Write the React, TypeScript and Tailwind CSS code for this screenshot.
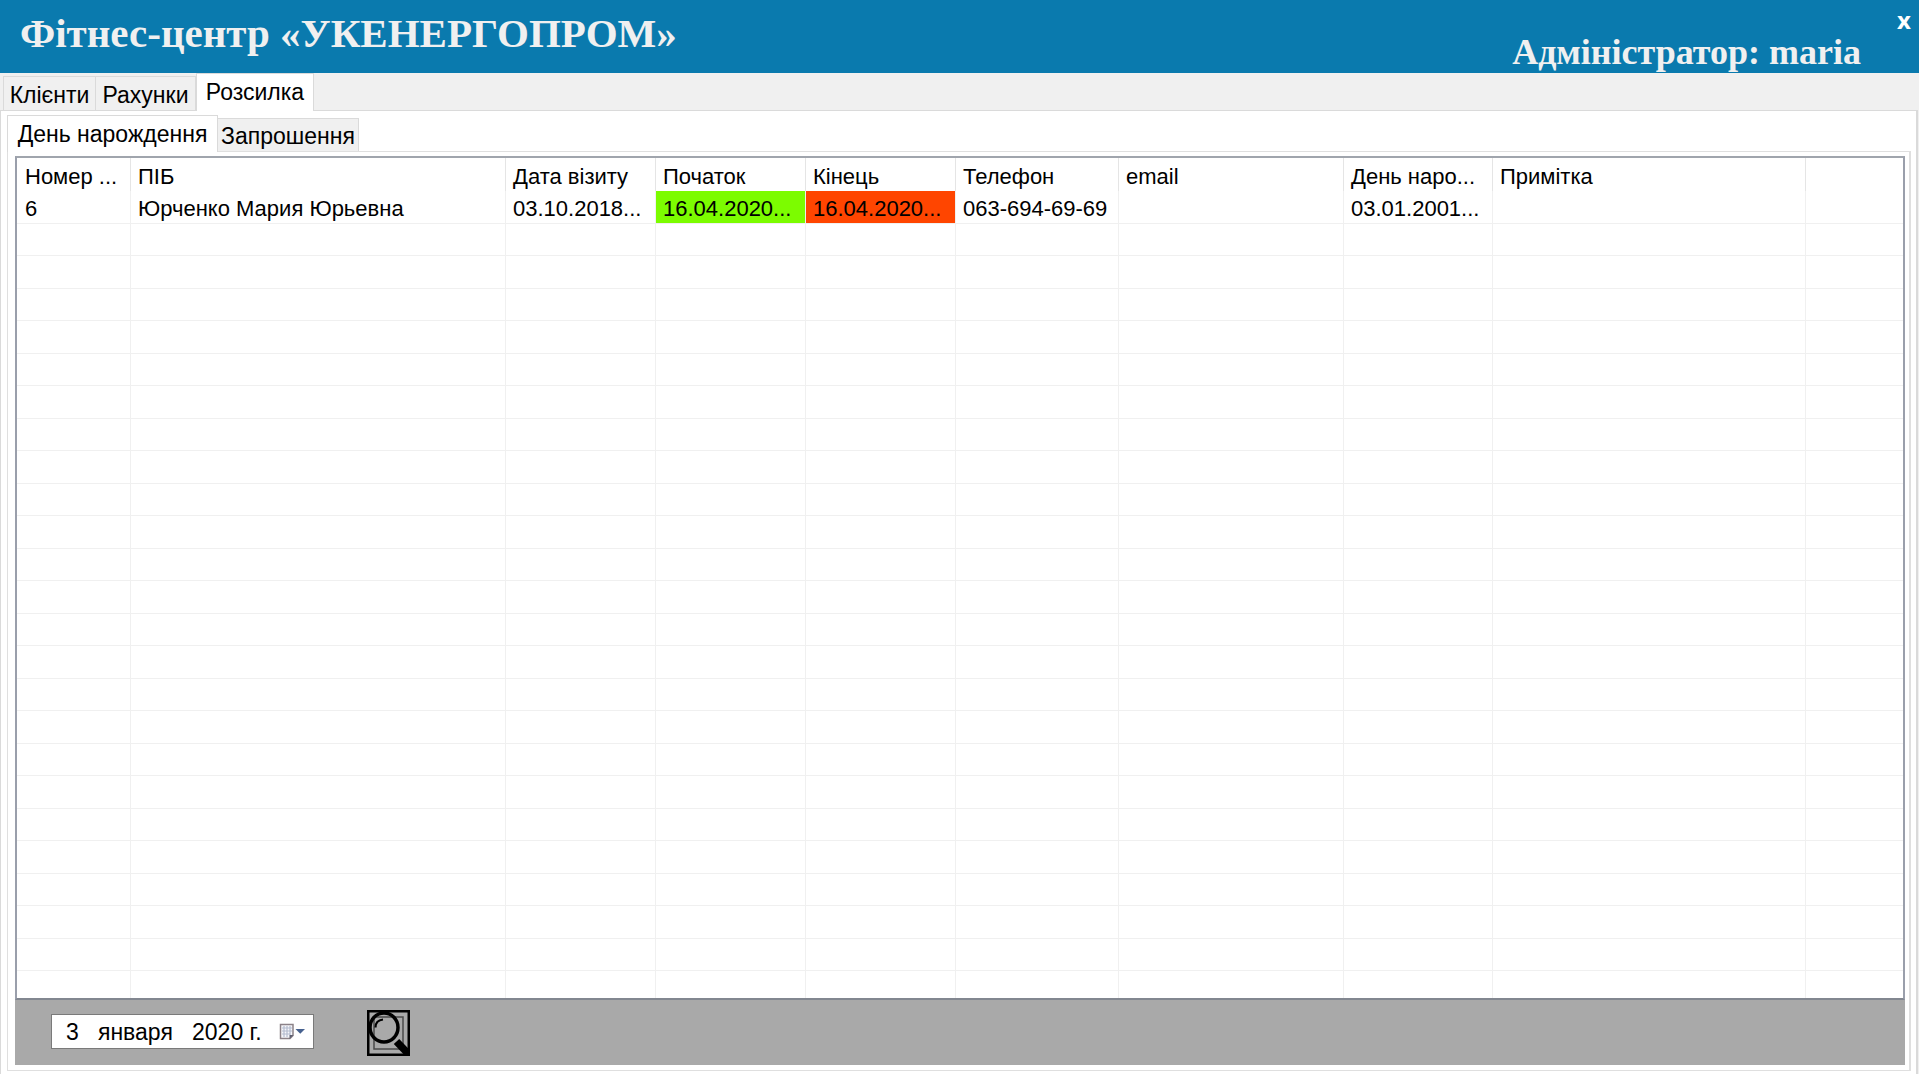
import { useState } from "react";

const columns = [
  { title: "Номер ...", width: "w-[114px]" },
  { title: "ПІБ", width: "w-[375px]" },
  { title: "Дата візиту", width: "w-[150px]" },
  { title: "Початок", width: "w-[150px]" },
  { title: "Кінець", width: "w-[150px]" },
  { title: "Телефон", width: "w-[163px]" },
  { title: "email", width: "w-[225px]" },
  { title: "День наро...", width: "w-[149px]" },
  { title: "Примітка", width: "w-[313px]" },
];

const client = [
  "6",
  "Юрченко Мария Юрьевна",
  "03.10.2018...",
  "16.04.2020...",
  "16.04.2020...",
  "063-694-69-69",
  "",
  "03.01.2001...",
  "",
];

const emptyRows = Array.from({ length: 24 }, (_, i) => i);

function cellColor(index: number) {
  if (index === 3) return "bg-[#7cfc00]";
  if (index === 4) return "bg-[#ff4500]";
  return "";
}

function Header() {
  return (
    <header className="flex h-[73px] shrink-0 items-start justify-between bg-[#0a7aae] pl-5 font-['Liberation_Serif',serif] font-bold text-[#f0f0f0]">
      <h1 className="pt-2 text-[41px] leading-[50px] whitespace-nowrap">Фітнес-центр «УКЕНЕРГОПРОМ»</h1>
      <div className="flex">
        <p className="pt-8 text-[36px] leading-10 whitespace-nowrap">Адміністратор: maria</p>
        <button
          type="button"
          aria-label="Закрити"
          className="ml-9 h-10 w-[22px] text-left font-['Open_Sans',sans-serif] text-2xl leading-10 font-bold text-white"
        >
          x
        </button>
      </div>
    </header>
  );
}

function Tab({ label, active, size, onClick }: { label: string; active: boolean; size: string; onClick: () => void }) {
  return (
    <button
      type="button"
      role="tab"
      aria-selected={active}
      onClick={onClick}
      className={`${size} border-[#dadada] text-[23px] whitespace-nowrap ${
        active
          ? "relative z-10 -mb-px self-stretch border-x border-t bg-white pb-px"
          : "mt-[3px] border-t border-r bg-[#f0f0f0] pt-0.5 first:border-l"
      }`}
    >
      {label}
    </button>
  );
}

function ClientTable() {
  return (
    <div className="min-h-0 flex-1 overflow-hidden border-2 border-t-[#a0a5ad] border-r-[#9a9fab] border-b-[#828790] border-l-[#9a9fab] bg-white">
      <table className="w-full table-fixed border-separate border-spacing-0 text-left">
        <colgroup>
          {columns.map((c) => (
            <col key={c.title} className={c.width} />
          ))}
          <col />
        </colgroup>
        <thead>
          <tr className="h-[33px]">
            {columns.map((c) => (
              <th
                key={c.title}
                scope="col"
                className="overflow-hidden border-r border-[#e5e5e5] pt-1 pl-[7px] font-normal whitespace-nowrap first:pl-2"
              >
                {c.title}
              </th>
            ))}
            <td />
          </tr>
        </thead>
        <tbody>
          <tr className="h-[33px]">
            {client.map((value, i) => (
              <td
                key={i}
                className={`overflow-hidden border-r border-b border-[#f0f0f0] pt-1 pl-[7px] whitespace-nowrap first:pl-2 ${cellColor(i)}`}
              >
                {value}
              </td>
            ))}
            <td className="border-b border-[#f0f0f0]" />
          </tr>
          {emptyRows.map((row) => (
            <tr key={row} className="h-8 odd:h-[33px]">
              {columns.map((c) => (
                <td key={c.title} className="border-r border-b border-[#f0f0f0]" />
              ))}
              <td className="border-b border-[#f0f0f0]" />
            </tr>
          ))}
        </tbody>
      </table>
    </div>
  );
}

function CalendarIcon() {
  return (
    <svg width="26" height="18" viewBox="0 0 26 18" aria-hidden="true">
      <path d="M1.5 1.500h12.500v11l-3 3h-9.500z" fill="#f6f6fa" stroke="#8c8288" strokeWidth="1.500" />
      <path d="M3 5h10M3 8h10M3 11h8M5 3v11M8 3v11M11 3v9" stroke="#b4bccf" strokeWidth="1.200" />
      <path d="M10.500 16v-4h4z" fill="#5f6070" />
      <path d="M16.500 6h9.500l-4.750 4.750z" fill="#46618f" />
    </svg>
  );
}

function SearchIcon() {
  return (
    <svg width="43" height="46" viewBox="0 0 43 46" fill="none" aria-hidden="true">
      <rect x="1.250" y="1.250" width="40.500" height="43.500" stroke="#000" strokeWidth="2.500" />
      <rect x="7" y="7" width="29" height="32" stroke="#4a4a4a" strokeWidth="1.500" />
      <ellipse cx="17" cy="17.500" rx="14" ry="14.500" stroke="#000" strokeWidth="3.500" />
      <path d="M8.500 17.500c0-4.500 3-7.500 7.500-8" stroke="#000" strokeWidth="2.200" />
      <path d="M29.500 31.500l12 12.500" stroke="#000" strokeWidth="7.500" />
    </svg>
  );
}

function Footer() {
  const [date, setDate] = useState("3   января   2020 г.");
  return (
    <div className="flex h-[65px] shrink-0 items-start bg-[#a9a9a9] pt-[10px] pl-9">
      <div className="mt-1 flex h-[35px] w-[263px] items-center border border-[#7a7a7a] bg-white">
        <input
          aria-label="Дата"
          value={date}
          onChange={(e) => setDate(e.target.value)}
          className="h-8 w-[227px] pt-0.5 pl-[14px] text-[23px] outline-none"
        />
        <button type="button" aria-label="Відкрити календар">
          <CalendarIcon />
        </button>
      </div>
      <button type="button" aria-label="Пошук" className="ml-[53px]">
        <SearchIcon />
      </button>
    </div>
  );
}

export default function App() {
  const [section, setSection] = useState(2);
  const [list, setList] = useState(0);
  return (
    <div className="flex h-screen flex-col overflow-hidden bg-[#f0f0f0] font-['Liberation_Sans',sans-serif] text-[22px] leading-6 text-black">
      <Header />
      <div role="tablist" aria-label="Розділи" className="flex h-[37px] shrink-0 pl-[3px]">
        <Tab label="Клієнти" size="w-[93px]" active={section === 0} onClick={() => setSection(0)} />
        <Tab label="Рахунки" size="w-[100px]" active={section === 1} onClick={() => setSection(1)} />
        <Tab label="Розсилка" size="w-[118px]" active={section === 2} onClick={() => setSection(2)} />
      </div>
      <main className="mr-px flex min-h-0 flex-1 flex-col border-t border-r-2 border-l border-[#dadada] bg-white pt-1 pr-[5px] pb-[3px] pl-[6px]">
        <div role="tablist" aria-label="Розсилка" className="flex h-9 shrink-0">
          <Tab label="День нарождення" size="w-[211px]" active={list === 0} onClick={() => setList(0)} />
          <Tab label="Запрошення" size="w-[141px]" active={list === 1} onClick={() => setList(1)} />
        </div>
        <div className="flex min-h-0 flex-1 flex-col border border-r-2 border-[#dfdfdf] pt-1 pr-1 pb-[5px] pl-[7px]">
          <ClientTable />
          <Footer />
        </div>
      </main>
    </div>
  );
}
